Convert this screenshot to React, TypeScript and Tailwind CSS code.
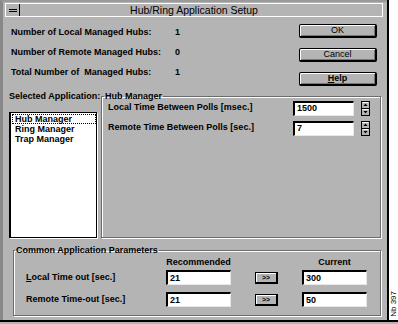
import React from 'react';

const font = "font-['Liberation_Sans',Arial,sans-serif]";

const Button = ({ children }: { children: React.ReactNode }) => (
  <div className="w-[78px] h-[14px] flex items-center justify-center border border-black border-b-2 border-r-2 rounded-[2px] bg-[#b4b4b4] shadow-[inset_1px_1px_0_#fff,inset_-1px_-1px_0_#777] text-[9px] leading-none">
    {children}
  </div>
);

const Field = ({ value, w = 'w-[61px]' }: { value: string; w?: string }) => (
  <div className={`${w} h-[15px] bg-white border-t-2 border-l-2 border-black border-r border-b border-r-[#e8e8e8] border-b-[#e8e8e8] flex items-center pl-[2px] text-[9px] font-bold leading-none`}>
    {value}
  </div>
);

const Spinner = () => (
  <svg width="9" height="15" viewBox="0 0 9 15" className="block">
    <rect x="0.5" y="0.5" width="8" height="14" fill="#b4b4b4" stroke="#000" />
    <line x1="0" y1="7.5" x2="9" y2="7.5" stroke="#000" />
    <line x1="1.5" y1="1.5" x2="7.5" y2="1.5" stroke="#fff" />
    <line x1="1.5" y1="8.5" x2="7.5" y2="8.5" stroke="#fff" />
    <path d="M4.5 2.5 L6.5 5 H2.5 Z" fill="#000" />
    <path d="M2.5 10 H6.5 L4.5 12.5 Z" fill="#000" />
  </svg>
);

const SmallBtn = () => (
  <div className="w-[23px] h-[12px] flex items-center justify-center border border-black border-b-2 border-r-2 bg-[#b4b4b4] shadow-[inset_1px_1px_0_#fff] text-[7px] font-bold leading-none">
    &gt;&gt;
  </div>
);

export default function App() {
  return (
    <div className={`w-[398px] h-[324px] bg-[#b4b4b4] flex flex-col overflow-hidden text-black ${font}`}>
      <div className="flex h-[320px]">
        {/* Dialog window */}
        <div className="w-[387px] flex flex-col border-l-[3px] border-l-[#888] border-t-2 border-t-[#9a9a9a]">
          {/* Title bar */}
          <div className="ml-[2px] mt-[1px] w-[378px] h-[14px] flex items-center border border-white">
            <div className="w-[14px] h-full flex flex-col items-center justify-center gap-[1px] border-r border-black">
              <div className="w-[8px] h-[1px] bg-black" />
              <div className="w-[8px] h-[1px] bg-black" />
            </div>
            <div className="flex-1 text-center text-[10.5px] leading-none pr-[14px]">Hub/Ring Application Setup</div>
          </div>

          {/* Counts + buttons */}
          <div className="flex mt-[6px]">
            <div className="pl-[8px] flex flex-col text-[9px] font-bold">
              {[
                ['Number of Local Managed Hubs:', '1'],
                ['Number of Remote Managed Hubs:', '0'],
                ['Total Number of  Managed Hubs:', '1'],
              ].map(([label, val]) => (
                <div key={label} className="h-[20px] flex items-center whitespace-pre">
                  <span className="w-[164px]">{label}</span>
                  <span>{val}</span>
                </div>
              ))}
            </div>
            <div className="ml-auto mr-[10px] pt-[1px] flex flex-col gap-[10px]">
              <Button>OK</Button>
              <Button>Cancel</Button>
              <Button>
                <span className="font-bold"><span className="underline">H</span>elp</span>
              </Button>
            </div>
          </div>

          {/* Application selection */}
          <div className="flex mt-[5px] h-[147px]">
            <div className="ml-[6px] w-[88px] flex flex-col">
              <div className="h-[10px] leading-[10px] text-[9px] font-bold whitespace-nowrap">Selected Application:</div>
              <div className="mt-[11px] flex-1 bg-white border border-black border-l-2 shadow-[1px_1px_0_#fff] pt-[1px] pl-[1px] text-[9px] font-bold">
                <div className="h-[10px] leading-[9px] border border-dotted border-black pl-[2px]">Hub Manager</div>
                <div className="h-[10px] leading-[10px] pl-[3px]">Ring Manager</div>
                <div className="h-[10px] leading-[10px] pl-[3px]">Trap Manager</div>
              </div>
            </div>
            <fieldset className="ml-[4px] w-[280px] border border-[#6c6c6c] shadow-[inset_1px_1px_0_#fff,1px_1px_0_#fff]">
              <legend className="h-[10px] leading-[10px] text-[9px] font-bold ml-[2px] px-[1px]">Hub Manager</legend>
              <div className="flex flex-col gap-[4px] -mt-[1px] pl-[6px]">
                <div className="flex items-center h-[16px]">
                  <span className="w-[185px] text-[9px] font-bold">Local Time Between Polls [msec.]</span>
                  <Field value="1500" />
                  <div className="ml-[7px]"><Spinner /></div>
                </div>
                <div className="flex items-center h-[16px]">
                  <span className="w-[185px] text-[9px] font-bold">Remote Time Between Polls [sec.]</span>
                  <Field value="7" />
                  <div className="ml-[7px]"><Spinner /></div>
                </div>
              </div>
            </fieldset>
          </div>

          {/* Common parameters */}
          <fieldset className="ml-[10px] mt-[7px] w-[368px] h-[71px] border border-[#6c6c6c] shadow-[inset_1px_1px_0_#fff,1px_1px_0_#fff] text-[9px] font-bold">
            <legend className="h-[10px] leading-[10px] ml-[1px] px-[1px]">Common Application Parameters</legend>
            <div className="pl-[12px]">
              <div className="flex h-[10px] mt-[2px] leading-[10px]">
                <span className="w-[140px]" />
                <span className="w-[65px] text-center">Recommended</span>
                <span className="w-[71px]" />
                <span className="w-[65px] text-center">Current</span>
              </div>
              <div className="flex items-center mt-[3px]">
                <span className="w-[140px]"><span className="underline">L</span>ocal Time out [sec.]</span>
                <Field value="21" w="w-[65px]" />
                <div className="ml-[24px]"><SmallBtn /></div>
                <div className="ml-[24px]"><Field value="300" w="w-[65px]" /></div>
              </div>
              <div className="flex items-center mt-[7px]">
                <span className="w-[140px]">Remote Time-out [sec.]</span>
                <Field value="21" w="w-[65px]" />
                <div className="ml-[24px]"><SmallBtn /></div>
                <div className="ml-[24px]"><Field value="50" w="w-[65px]" /></div>
              </div>
            </div>
          </fieldset>
        </div>

        {/* Side strip */}
        <div className="w-[11px] border-l-2 border-black bg-white flex flex-col justify-end items-center pb-[3px]">
          <span className="[writing-mode:vertical-rl] rotate-180 text-[8px] leading-none">Nb 397</span>
        </div>
      </div>
      <div className="h-[2px] bg-black" />
    </div>
  );
}
